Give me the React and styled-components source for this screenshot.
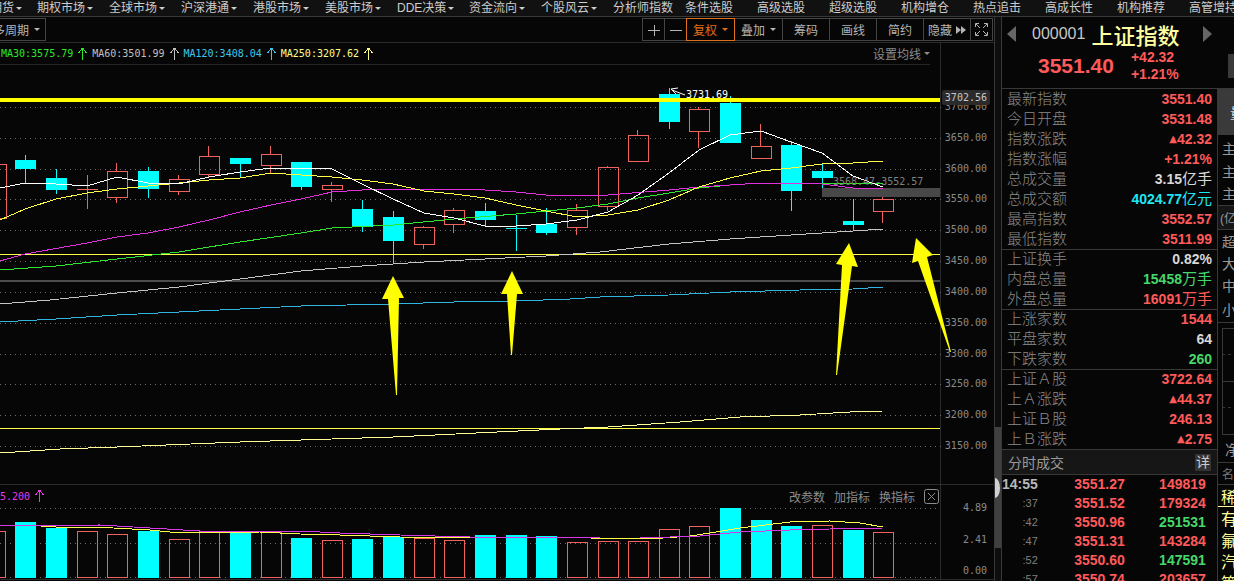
import styled, { createGlobalStyle } from "styled-components"

const GlobalStyle = createGlobalStyle`
  * {
    box-sizing: border-box;
  }
  body {
    margin: 0;
    background-color: #060606;
    color: #c8c8c8;
    font-family: "Liberation Sans", "Noto Sans CJK SC", sans-serif;
    font-size: 12px;
  }
  button {
    padding: 0;
    border: 0;
    background: none;
    color: inherit;
    font: inherit;
    white-space: nowrap;
    cursor: pointer;
  }
`

const RED = "#ff5a5a"
const GREEN = "#46d76a"
const CYAN = "#1fe5f2"
const WHITE = "#d8d8d8"
const OUTLINE = "#f0635c"

const Page = styled.div`
  display: flex;
  flex-direction: column;
  height: 100vh;
  overflow: hidden;
`

const TopNav = styled.nav`
  display: flex;
  flex: none;
  height: 17px;
  background-color: #111111;
  border-bottom: 1px solid #383838;
  overflow: hidden;
`

const NavItem = styled.a`
  display: flex;
  flex: none;
  align-items: center;
  justify-content: ${props => props.$first ? "flex-end" : "flex-start"};
  width: ${props => props.$first ? "37px" : "72px"};
  padding-right: ${props => props.$first ? "15px" : "0"};
  color: #cccccc;
  line-height: 14px;
  text-decoration: none;
  white-space: nowrap;
`

const Caret = styled.span`
  flex: none;
  margin-left: ${props => props.$gap || 2}px;
  border: 3px solid transparent;
  border-top-color: currentColor;
  border-bottom: 0;
`

const Body = styled.div`
  display: flex;
  flex: 1;
  min-height: 0;
`

const Main = styled.main`
  display: flex;
  flex: 1;
  flex-direction: column;
  min-width: 0;
`

const Toolbar = styled.div`
  display: flex;
  flex: none;
  justify-content: space-between;
  height: 26px;
  padding: 1px 1px 0 0;
  border-bottom: 1px solid #2a2a2a;
`

const ToolGroup = styled.div`
  display: flex;
`

const ToolButton = styled.button`
  display: flex;
  position: relative;
  z-index: ${props => props.$active ? 1 : 0};
  align-items: center;
  justify-content: center;
  width: ${props => props.$width || 48}px;
  height: 23px;
  margin-left: -1px;
  border: 1px solid ${props => props.$active ? "#e0701c" : "#444444"};
  color: ${props => props.$active ? "#e0701c" : "#b4b4b4"};
`

const PeriodButton = styled(ToolButton)`
  justify-content: flex-end;
  padding-right: 5px;
`

const Charts = styled.div`
  display: grid;
  flex: 1;
  grid-template-columns: 1fr 54px;
  grid-template-rows: 1fr 96px;
  min-height: 0;
  padding-bottom: 1px;
`

const Pane = styled.section`
  display: flex;
  flex-direction: column;
  min-width: 0;
  min-height: 0;
  border-top: ${props => props.$ruled ? "1px solid #2c2c2c" : "0"};
  border-bottom: ${props => props.$ruled ? "1px solid #2c2c2c" : "0"};
`

const Legend = styled.div`
  display: flex;
  flex: none;
  align-items: center;
  height: 22px;
  margin-right: 10px;
  padding-left: 1px;
  border-bottom: 1px solid #242424;
`

const Reading = styled.span`
  display: flex;
  align-items: center;
  color: ${props => props.$color};
  font-family: "DejaVu Sans Mono", monospace;
  font-size: 10px;
`

const PlainButton = styled.button`
  display: flex;
  align-items: center;
  color: #8c8c8c;
`

const LegendButton = styled(PlainButton)`
  margin-left: auto;
`

const Plot = styled.svg`
  display: block;
  flex: 1;
  width: 100%;
  min-height: 0;
  overflow: visible;
  position: relative;
`

const VolumeHead = styled.div`
  display: flex;
  flex: none;
  align-items: center;
  gap: 9px;
  height: 22px;
  padding-right: 1px;
`

const CloseButton = styled.button`
  display: flex;
  color: #8c8c8c;
`

const Axis = styled.div`
  display: flex;
  position: relative;
  z-index: ${props => props.$ruled ? 0 : -1};
  flex-direction: column;
  align-items: flex-end;
  justify-content: space-between;
  padding: ${props => props.$ruled ? "17px 7px 2px 0" : "58px 7px 32px 0"};
  border-left: 1px solid #2c2c2c;
  border-top: ${props => props.$ruled ? "1px solid #2c2c2c" : "0"};
  border-bottom: ${props => props.$ruled ? "1px solid #2c2c2c" : "0"};
  color: #8a8a8a;
  font-family: "DejaVu Sans Mono", monospace;
  font-size: 10px;
  line-height: 12px;
`

const PriceTag = styled.span`
  position: absolute;
  top: 47px;
  right: 4px;
  padding: 0 3px;
  border-radius: 2px;
  background-color: #2b2b2b;
  color: #c8c8c8;
  line-height: 15px;
`

const Splitter = styled.div`
  position: relative;
  flex: none;
  width: 8px;
  border-left: 1px solid #383838;
  border-right: 1px solid #383838;
  background-color: #0e0e0e;
`

const Thumb = styled.div`
  height: 121px;
  margin-top: 410px;
  background-color: #404040;
`

const Handle = styled.span`
  position: absolute;
  top: 461px;
  left: 0;
  width: 5px;
  height: 20px;
  border-radius: 0 5px 5px 0 / 0 10px 10px 0;
  background-color: #d0d0d0;
`

const Side = styled.aside`
  display: flex;
  flex: none;
  flex-direction: column;
  width: 232px;
`

const QuoteHead = styled.header`
  flex: none;
  height: 72px;
  border-bottom: 1px solid #383838;
`

const TitleRow = styled.div`
  display: flex;
  align-items: center;
  height: 34px;
  padding-left: 5px;
`

const Step = styled.button`
  border: 8px solid transparent;
  border-${props => props.$side}: 9px solid #666666;
  border-${props => props.$side === "left" ? "right" : "left"}: 0;
`

const Code = styled.span`
  margin-left: 16px;
  font-size: 16px;
`

const Name = styled.h1`
  margin: 0 24px 0 6px;
  color: #ffffa0;
  font-family: "Noto Sans CJK SC", sans-serif;
  font-size: 22px;
  font-weight: 500;
  line-height: 30px;
`

const PriceRow = styled.div`
  display: flex;
  align-items: center;
  height: 30px;
  padding-left: 36px;
  color: ${RED};
  font-weight: bold;
`

const LastPrice = styled.strong`
  font-size: 21px;
`

const Change = styled.div`
  margin-left: 17px;
  font-size: 14px;
  line-height: 17px;
`

const SideTab = styled.span`
  align-self: center;
  width: 6px;
  height: 24px;
  margin-left: auto;
  background-color: #3a3a3a;
`

const SideBody = styled.div`
  display: flex;
  flex: 1;
  min-height: 0;
  overflow: hidden;
`

const Quote = styled.div`
  flex: 1;
  min-width: 0;
`

const Stats = styled.dl`
  margin: 0;
  background: linear-gradient(${props => props.$ruled ? "#383838" : "transparent"}, ${props => props.$ruled ? "#383838" : "transparent"}) top / 100% 1px no-repeat;
`

const Stat = styled.div`
  display: flex;
  align-items: center;
  justify-content: space-between;
  height: 20px;
  padding: 0 5px;
`

const StatLabel = styled.dt`
  align-self: flex-start;
  color: #8a8a8a;
  font-family: "Noto Sans CJK SC", sans-serif;
  font-size: 15px;
  font-weight: 300;
  line-height: 18px;
`

const StatValue = styled.dd`
  display: flex;
  align-items: center;
  margin: 0;
  color: ${props => props.$color};
  font-size: 14px;
  font-weight: bold;
  line-height: 20px;
`

const Unit = styled.span`
  font-size: 15px;
  font-weight: normal;
`

const Rise = styled.span`
  font-family: "DejaVu Sans", sans-serif;
  font-size: 10px;
`

const TicksHead = styled.div`
  display: flex;
  align-items: center;
  justify-content: space-between;
  height: 26px;
  padding: 0 6px;
  border-top: 1px solid #383838;
  border-bottom: 1px solid #383838;
  background-color: #161616;
  color: #999999;
  font-size: 14px;
`

const DetailButton = styled.button`
  width: 16px;
  height: 17px;
  background-color: #333333;
  color: #cccccc;
  line-height: 16px;
`

const Ticks = styled.table`
  border-collapse: collapse;
  font-size: 14px;
  font-weight: bold;
`

const Tick = styled.tr`
  height: 19px;
`

const TickCell = styled.td`
  width: ${props => props.$width}px;
  padding: 0;
  color: ${props => props.$color};
  font-size: ${props => props.$minor ? "11px" : "14px"};
  font-weight: ${props => props.$minor ? "normal" : "bold"};
  line-height: 19px;
  text-align: right;
`

const Rail = styled.div`
  flex: none;
  width: 17px;
  border-left: 1px solid #383838;
  overflow: hidden;
`

const RailCell = styled.div`
  display: flex;
  align-items: center;
  height: ${props => props.$height}px;
  padding-left: ${props => props.$pad || 4}px;
  border-bottom: ${props => props.$line ? `1px solid ${props.$line}` : "0"};
  background-color: ${props => props.$bg || "transparent"};
  color: ${props => props.$color || "#999999"};
  font-size: ${props => props.$size || 14}px;
  white-space: nowrap;
`

const menu = ["期货", "期权市场", "全球市场", "沪深港通", "港股市场", "美股市场", "DDE决策", "资金流向", "个股风云"]
const links = ["分析师指数", "条件选股", "高级选股", "超级选股", "机构增仓", "热点追击", "高成长性", "机构推荐", "高管增持"]

const averages = [
  { text: "MA30:3575.79", color: "#2be82b" },
  { text: "MA60:3501.99", color: "#c0c0c0" },
  { text: "MA120:3408.04", color: "#3cc8ec" },
  { text: "MA250:3207.62", color: "#ffff8c" },
]

const priceTicks = ["3700.00", "3650.00", "3600.00", "3550.00", "3500.00", "3450.00", "3400.00", "3350.00", "3300.00", "3250.00", "3200.00", "3150.00"]
const priceGrid = [107, 138, 169, 199, 230, 261, 292, 323, 354, 384, 415, 446]

// x, high, top, bottom, low, up, volume top, volume up
const candles = [
  [-5, 164, 164, 219, 219, 1, 531, 1],
  [25, 155, 160, 169, 184, 0, 522, 0],
  [56, 169, 178, 190, 194, 0, 528, 0],
  [87, 175, 189, 189, 209, 1, 531, 1],
  [117, 163, 171, 198, 203, 1, 534, 1],
  [148, 167, 171, 189, 198, 0, 531, 0],
  [179, 175, 179, 192, 195, 1, 539, 1],
  [209, 146, 156, 175, 177, 1, 531, 1],
  [240, 158, 158, 164, 178, 0, 531, 0],
  [271, 146, 154, 166, 173, 1, 532, 1],
  [301, 162, 162, 187, 190, 0, 538, 0],
  [332, 182, 185, 190, 202, 1, 540, 1],
  [362, 200, 209, 227, 232, 0, 539, 0],
  [393, 211, 217, 241, 263, 0, 537, 0],
  [424, 226, 227, 245, 249, 1, 538, 1],
  [454, 208, 210, 225, 233, 1, 540, 1],
  [485, 203, 211, 220, 226, 0, 535, 0],
  [516, 215, 228, 228, 251, 0, 535, 0],
  [546, 208, 224, 233, 235, 0, 536, 0],
  [577, 204, 210, 228, 235, 1, 542, 1],
  [608, 166, 167, 207, 211, 1, 541, 1],
  [638, 130, 135, 162, 162, 1, 541, 1],
  [669, 88, 94, 122, 129, 0, 529, 1],
  [699, 107, 109, 132, 148, 1, 526, 1],
  [730, 96, 103, 143, 143, 0, 508, 0],
  [761, 124, 146, 159, 159, 1, 520, 0],
  [791, 141, 145, 191, 211, 0, 526, 0],
  [822, 163, 171, 178, 188, 0, 525, 1],
  [853, 199, 221, 225, 231, 0, 530, 0],
  [883, 197, 199, 212, 223, 1, 532, 1],
]

const priceLines = [
  ["#ffff96", "0,453 60,449 117,447 240,442 393,437 560,429 608,427 680,422 740,417 800,415 850,412 883,411"],
  ["#30b4e0", "0,322 56,319 117,315 179,312 240,309 301,306 393,304 454,302 516,301 570,299 600,297 669,295 730,292 800,290 853,289 883,287"],
  ["#c4c4c4", "0,304 50,300 117,293 179,287 240,279 301,271 362,266 424,262 485,259 546,256 600,252 669,244 730,239 791,235 853,231 883,229"],
  ["#2be82b", "0,270 56,266 117,259 179,252 240,242 301,233 332,228 393,225 454,219 516,214 577,208 608,204 638,198 669,193 699,188 730,185 761,183 820,183 883,184"],
  ["#e030e0", "0,261 25,254 87,243 117,237 148,233 179,227 209,220 240,212 271,205 301,199 332,192 362,190 393,189 470,189 516,192 546,195 608,195 669,190 699,187 730,185 761,183 791,183 822,184 853,188 883,189"],
  ["#ffff46", "0,220 25,209 56,199 87,193 117,189 148,186 179,183 209,180 240,178 271,173 301,175 332,177 362,180 393,184 424,191 454,194 485,198 516,205 546,211 577,217 608,215 638,210 669,200 699,187 730,178 761,171 791,168 822,164 853,163 883,161"],
  ["#ffffff", "0,188 25,183 56,184 87,186 117,177 148,183 179,184 209,177 240,172 271,168 301,168 332,169 362,184 393,199 424,213 454,218 485,226 516,226 546,224 577,220 608,212 638,195 669,173 699,150 730,135 761,131 791,142 822,153 853,176 883,187"],
]

const volumeLines = [
  ["#ffff46", "0,526 25,525 56,527 95,527 150,530 180,533 260,532 300,534 340,535 400,537 450,538 470,537 560,537 590,538 650,539 690,536 710,533 740,528 790,522 830,521 860,523 883,527"],
  ["#d838e8", "0,526 100,525 150,528 200,531 300,531 340,533 400,535 470,537 550,537 600,538 640,538 700,536 740,532 790,530 830,529 883,528"],
]

const pointers = [
  "393,276 404,298 399,298 397,395 396,395 388,299 382,299",
  "512,271 523,294 517,294 512,355 511,355 507,294 501,294",
  "849,243 858,267 852,266 837,375 836,375 842,265 836,264",
  "916,238 933,255 927,257 951,352 950,352 918,261 912,263",
]

const stats = [
  [
    { label: "最新指数", value: "3551.40", color: RED },
    { label: "今日开盘", value: "3531.48", color: RED },
    { label: "指数涨跌", value: "42.32", color: RED, rise: true },
    { label: "指数涨幅", value: "+1.21%", color: RED },
    { label: "总成交量", value: "3.15", unit: "亿手", color: WHITE },
    { label: "总成交额", value: "4024.77", unit: "亿元", color: CYAN },
    { label: "最高指数", value: "3552.57", color: RED },
    { label: "最低指数", value: "3511.99", color: RED },
  ],
  [
    { label: "上证换手", value: "0.82%", color: WHITE },
    { label: "内盘总量", value: "15458", unit: "万手", color: GREEN },
    { label: "外盘总量", value: "16091", unit: "万手", color: RED },
  ],
  [
    { label: "上涨家数", value: "1544", color: RED },
    { label: "平盘家数", value: "64", color: WHITE },
    { label: "下跌家数", value: "260", color: GREEN },
  ],
  [
    { label: "上证Ａ股", value: "3722.64", color: RED },
    { label: "上Ａ涨跌", value: "44.37", color: RED, rise: true },
    { label: "上证Ｂ股", value: "246.13", color: RED },
    { label: "上Ｂ涨跌", value: "2.75", color: RED, rise: true },
  ],
]

const ticks = [
  ["14:55", "3551.27", "149819", RED],
  [":37", "3551.52", "179324", RED],
  [":42", "3550.96", "251531", GREEN],
  [":47", "3551.31", "143284", RED],
  [":52", "3550.60", "147591", GREEN],
  [":57", "3550.74", "203657", RED],
]

function UpArrow() {
  return (
    <svg width="19" height="14" viewBox="0 0 19 14" fill="none" stroke="currentColor" shapeRendering="crispEdges">
      <path d="M9.5 1v12M9.5 1l-4 5M9.5 1l4 5" />
    </svg>
  )
}

function Candle({ data }) {
  const [x, high, top, bottom, low, up] = data
  if (top === bottom) {
    return <path d={`M${x - 10} ${top}.5h21M${x}.5 ${high}V${low}`} stroke={up ? OUTLINE : "#00ffff"} />
  }
  if (up) {
    return (
      <path
        d={`M${x - 9}.5 ${top}.5h20v${bottom - top - 1}h-20zM${x}.5 ${high}V${top}M${x}.5 ${bottom}V${low}`}
        transform={x < 0 ? "translate(1 0)" : "translate(-1 0)"}
        stroke={OUTLINE}
        fill="none"
      />
    )
  }
  return (
    <g fill="#00ffff">
      <rect x={x} y={high} width="1" height={low - high} />
      <rect x={x - 10} y={top} width="21" height={bottom - top} />
    </g>
  )
}

function PriceChart() {
  return (
    <Plot viewBox="0 65 940 419" preserveAspectRatio="none">
      <g shapeRendering="crispEdges">
        {priceGrid.map(y => (
          <line key={y} x1="0" x2="943" y1={y + 0.5} y2={y + 0.5} stroke="#6c6c6c" strokeDasharray="1 4" />
        ))}
        <rect x="0" y="280" width="940" height="2" fill="#4c4c4c" />
        {candles.map(c => <Candle key={c[0]} data={c} />)}
        <rect x="0" y="98" width="940" height="4" fill="#ffff00" />
        <rect x="0" y="254" width="940" height="1" fill="#ffff46" />
        <rect x="0" y="428" width="940" height="1" fill="#ffff46" />
      </g>
      <rect x="822" y="188" width="118" height="9" fill="#484848" />
      <g fill="none" shapeRendering="crispEdges">
        {priceLines.map(([color, points]) => <polyline key={color} points={points} stroke={color} />)}
      </g>
      <path d="M672 90l13 5M671 89l7-1M671 89l5 5" stroke="#ffffff" fill="none" />
      <g fontFamily="DejaVu Sans Mono, monospace" fontSize="10">
        <text x="686" y="98" fill="#ffffff">3731.69</text>
        <text x="833" y="185" fill="#808080">3568.47-3552.57</text>
      </g>
      {pointers.map(points => <polygon key={points} points={points} fill="#ffff00" />)}
    </Plot>
  )
}

function VolumeChart() {
  return (
    <Plot viewBox="0 507 940 72" preserveAspectRatio="none">
      <g shapeRendering="crispEdges" fill="none">
        {[508, 543, 577].map(y => (
          <line key={y} x1="0" x2="943" y1={y + 0.5} y2={y + 0.5} stroke="#6c6c6c" strokeDasharray="1 4" />
        ))}
        {candles.map(([x, , , , , , top, up]) => up
          ? <rect key={x} x={x < 0 ? -14.5 : x - 9.5} y={top + 0.5} width="20" height={577 - top} stroke={OUTLINE} />
          : <rect key={x} x={x - 10} y={top} width="21" height={578 - top} fill="#00ffff" />)}
        {volumeLines.map(([color, points]) => <polyline key={color} points={points} stroke={color} />)}
      </g>
    </Plot>
  )
}

function QuotePanel() {
  return (
    <Quote>
      {stats.map((group, i) => (
        <Stats key={i} $ruled={i > 0}>
          {group.map(row => (
            <Stat key={row.label}>
              <StatLabel>{row.label}</StatLabel>
              <StatValue $color={row.color}>
                {row.rise && <Rise>▲</Rise>}
                {row.value}
                {row.unit && <Unit>{row.unit}</Unit>}
              </StatValue>
            </Stat>
          ))}
        </Stats>
      ))}
      <TicksHead>
        分时成交
        <DetailButton>详</DetailButton>
      </TicksHead>
      <Ticks>
        <tbody>
          {ticks.map(([time, price, volume, color], i) => (
            <Tick key={time}>
              <TickCell $width={35} $minor={i > 0} $color={i > 0 ? "#808080" : "#b8b8b8"}>{time}</TickCell>
              <TickCell $width={87} $color={RED}>{price}</TickCell>
              <TickCell $width={81} $color={color}>{volume}</TickCell>
            </Tick>
          ))}
        </tbody>
      </Ticks>
    </Quote>
  )
}

function SideRail() {
  return (
    <Rail>
      <RailCell $height={46} $pad={12} $bg="#3a3a3a" $color="#dddddd">量</RailCell>
      <RailCell $height={26}>主</RailCell>
      <RailCell $height={19}>主</RailCell>
      <RailCell $height={26} $line="#383838">主</RailCell>
      <RailCell $height={24} $pad={2} $size={12} $bg="#161616" $line="#383838">(亿)</RailCell>
      <RailCell $height={22}>超</RailCell>
      <RailCell $height={22}>大</RailCell>
      <RailCell $height={22}>中</RailCell>
      <RailCell $height={27} $line="#383838">小</RailCell>
      <svg width="16" height="112" viewBox="0 0 16 112" display="block" fill="none" stroke="#383838" shapeRendering="crispEdges">
        <path d="M16 5.5H4.5v106H16M4 58.5h12" />
        <path d="M4 31.5h12M4 84.5h12" strokeDasharray="3 3" />
      </svg>
      <RailCell $height={28} $pad={7} $line="#383838">净</RailCell>
      <RailCell $height={22} $size={12} $line="#383838" $color="#777777">名称</RailCell>
      <RailCell $height={22} $pad={3} $size={16} $line="#ffffa0" $color="#ffff96">稀</RailCell>
      <RailCell $height={22} $pad={3} $size={16} $color="#ffff96">有</RailCell>
      <RailCell $height={21} $pad={3} $size={16} $color="#ffff96">氟</RailCell>
      <RailCell $height={21} $pad={3} $size={16} $color="#ffff96">汽</RailCell>
      <RailCell $height={21} $pad={3} $size={16} $color="#ffff96">等</RailCell>
    </Rail>
  )
}

export default function App() {
  return (
    <Page>
      <GlobalStyle />
      <TopNav>
        {menu.map((name, i) => <NavItem key={name} href="#" $first={i === 0}>{name}<Caret /></NavItem>)}
        {links.map(name => <NavItem key={name} href="#">{name}</NavItem>)}
      </TopNav>
      <Body>
        <Main>
          <Toolbar>
            <PeriodButton $width={47}>多周期<Caret $gap={5} /></PeriodButton>
            <ToolGroup>
              <ToolButton $width={23} aria-label="放大">
                <svg width="12" height="12" stroke="currentColor" shapeRendering="crispEdges"><path d="M0 6.5h12M6.5 1v11" /></svg>
              </ToolButton>
              <ToolButton $width={23} aria-label="缩小">
                <svg width="12" height="12" stroke="currentColor" shapeRendering="crispEdges"><path d="M0 6.5h12" /></svg>
              </ToolButton>
              <ToolButton $width={49} $active>复权<Caret $gap={5} /></ToolButton>
              <ToolButton $width={49}>叠加<Caret $gap={5} /></ToolButton>
              <ToolButton>筹码</ToolButton>
              <ToolButton>画线</ToolButton>
              <ToolButton>简约</ToolButton>
              <ToolButton>
                隐藏
                <svg width="14" height="10" fill="currentColor"><path d="M4 1l5 4-5 4zM9 1l5 4-5 4z" /></svg>
              </ToolButton>
              <ToolButton $width={23} aria-label="全屏">
                <svg width="15" height="15" viewBox="0 0 15 15" fill="none" stroke="currentColor">
                  <path d="M1.500 5V1.500H5M10 1.500h3.500V5M13.500 10v3.500H10M5 13.500H1.500V10M2 2l4 4M13 2L9 6M13 13L9 9M2 13l4-4" />
                </svg>
              </ToolButton>
            </ToolGroup>
          </Toolbar>
          <Charts>
            <Pane>
              <Legend>
                {averages.map(ma => <Reading key={ma.text} $color={ma.color}>{ma.text}<UpArrow /></Reading>)}
                <LegendButton>设置均线<Caret $gap={3} /></LegendButton>
              </Legend>
              <PriceChart />
            </Pane>
            <Axis>
              {priceTicks.map(label => <span key={label}>{label}</span>)}
              <PriceTag>3702.56</PriceTag>
            </Axis>
            <Pane $ruled>
              <VolumeHead>
                <Reading $color="#e838e8">5.200<UpArrow /></Reading>
                <LegendButton>改参数</LegendButton>
                <PlainButton>加指标</PlainButton>
                <PlainButton>换指标</PlainButton>
                <CloseButton aria-label="关闭">
                  <svg width="15" height="15" fill="none" stroke="currentColor">
                    <rect x="0.500" y="0.500" width="14" height="14" rx="2" />
                    <path d="M4 4l7 7M11 4l-7 7" />
                  </svg>
                </CloseButton>
              </VolumeHead>
              <VolumeChart />
            </Pane>
            <Axis $ruled>
              <span>4.89</span>
              <span>2.41</span>
              <span>0.00</span>
            </Axis>
          </Charts>
        </Main>
        <Splitter>
          <Thumb />
          <Handle />
        </Splitter>
        <Side>
          <QuoteHead>
            <TitleRow>
              <Step $side="right" aria-label="上一个" />
              <Code>000001</Code>
              <Name>上证指数</Name>
              <Step $side="left" aria-label="下一个" />
            </TitleRow>
            <PriceRow>
              <LastPrice>3551.40</LastPrice>
              <Change>+42.32<br />+1.21%</Change>
              <SideTab />
            </PriceRow>
          </QuoteHead>
          <SideBody>
            <QuotePanel />
            <SideRail />
          </SideBody>
        </Side>
      </Body>
    </Page>
  )
}
